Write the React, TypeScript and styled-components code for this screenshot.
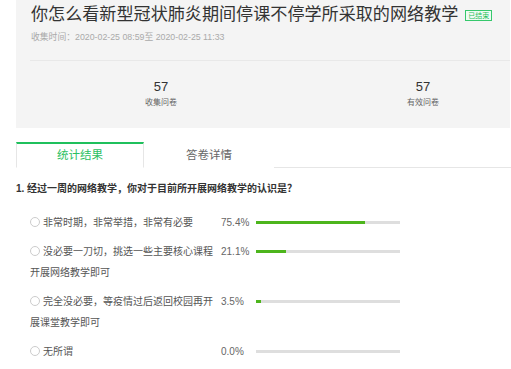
import styled, { createGlobalStyle } from "styled-components";

const options = [
  { text: "非常时期，非常举措，非常有必要", percent: 75.4 },
  { text: "没必要一刀切，挑选一些主要核心课程开展网络教学即可", percent: 21.1 },
  { text: "完全没必要，等疫情过后返回校园再开展课堂教学即可", percent: 3.5 },
  { text: "无所谓", percent: 0 },
];

export default function App() {
  return (
    <>
      <GlobalStyle />
      <Page>
        <Summary>
          <TitleRow>
            <Title>你怎么看新型冠状肺炎期间停课不停学所采取的网络教学</Title>
            <Badge>已结束</Badge>
          </TitleRow>
          <Meta>收集时间：2020-02-25 08:59至 2020-02-25 11:33</Meta>
          <Stats>
            <Stat>
              <StatNum>57</StatNum>
              <StatLabel>收集问卷</StatLabel>
            </Stat>
            <Stat>
              <StatNum>57</StatNum>
              <StatLabel>有效问卷</StatLabel>
            </Stat>
          </Stats>
        </Summary>

        <Tabs>
          <Tab $active>统计结果</Tab>
          <Tab>答卷详情</Tab>
        </Tabs>

        <Question>1. 经过一周的网络教学，你对于目前所开展网络教学的认识是？</Question>

        <Options>
          {options.map((o) => (
            <Option key={o.text}>
              <Label>
                <Radio />
                {o.text}
              </Label>
              <Percent>{o.percent.toFixed(1)}%</Percent>
              <Track>
                <Fill style={{ width: `${o.percent}%` }} />
              </Track>
            </Option>
          ))}
        </Options>
      </Page>
    </>
  );
}

const GlobalStyle = createGlobalStyle`
  html, body {
    margin: 0;
    padding: 0;
    background: #fff;
    font-family: "Liberation Sans", "Noto Sans CJK SC", sans-serif;
  }
`;

const Page = styled.div`
  width: 511px;
  height: 369px;
  overflow: hidden;
  padding-left: 16px;
  box-sizing: border-box;
`;

const Summary = styled.div`
  width: 494px;
  height: 128px;
  background: #f4f4f4;
  padding-left: 14px;
  box-sizing: border-box;
  overflow: hidden;
`;

const TitleRow = styled.div`
  display: flex;
  align-items: center;
  height: 30px;
`;

const Title = styled.h1`
  margin: 0 0 0 1px;
  font-size: 17.1px;
  font-weight: normal;
  line-height: 30px;
  color: #333;
  white-space: nowrap;
`;

const Badge = styled.span`
  margin-left: 7px;
  margin-top: 1px;
  padding: 0 2px;
  height: 9px;
  line-height: 9px;
  font-size: 7px;
  color: #1fbf5b;
  background: #effaf3;
  border: 1px solid #36c86c;
  white-space: nowrap;
`;

const Meta = styled.div`
  margin-left: 1px;
  font-size: 8.8px;
  line-height: 14px;
  color: #aaa;
  margin-bottom: 16px;
`;

const Stats = styled.div`
  display: grid;
  grid-template-columns: 262px 262px;
  height: 67px;
  border-top: 1px solid #e8e8e8;
  padding-top: 18px;
  box-sizing: border-box;
`;

const Stat = styled.div`
  display: flex;
  flex-direction: column;
  align-items: center;
  gap: 2px;
`;

const StatNum = styled.div`
  font-size: 13px;
  line-height: 16px;
  color: #333;
`;

const StatLabel = styled.div`
  font-size: 8px;
  line-height: 12px;
  color: #666;
`;

const Tabs = styled.div`
  display: flex;
  margin-top: 14px;
  border-bottom: 1px solid #e6e6e6;
`;

const Tab = styled.div<{ $active?: boolean }>`
  width: 128px;
  height: 23px;
  line-height: 23px;
  text-align: center;
  font-size: 11.5px;
  color: ${(p) => (p.$active ? "#2cc062" : "#666")};
  background: #fff;
  border-top: 2px solid ${(p) => (p.$active ? "#1fc05c" : "transparent")};
  border-left: 1px solid ${(p) => (p.$active ? "#e6e6e6" : "transparent")};
  border-right: 1px solid ${(p) => (p.$active ? "#e6e6e6" : "transparent")};
  border-bottom: 1px solid ${(p) => (p.$active ? "#fff" : "transparent")};
  margin-bottom: -1px;
  box-sizing: content-box;

  &:first-child {
    width: 126px;
  }
`;

const Question = styled.div`
  margin-top: 14px;
  font-size: 10px;
  line-height: 14px;
  font-weight: bold;
  color: #333;
`;

const Options = styled.div`
  margin-top: 16px;
  padding-left: 14px;
  display: flex;
  flex-direction: column;
  gap: 8px;
`;

const Option = styled.div`
  display: flex;
  align-items: flex-start;
`;

const Label = styled.div`
  width: 191px;
  font-size: 10px;
  line-height: 21px;
  color: #555;
`;

const Radio = styled.span`
  display: inline-block;
  width: 8px;
  height: 8px;
  border: 1px solid #ccc;
  border-radius: 50%;
  margin-right: 3px;
  vertical-align: -1px;
`;

const Percent = styled.div`
  width: 35px;
  font-size: 10px;
  line-height: 21px;
  color: #666;
`;

const Track = styled.div`
  width: 144px;
  height: 3px;
  margin-top: 9px;
  background: #dedede;
`;

const Fill = styled.div`
  height: 100%;
  background: #4db51c;
`;
